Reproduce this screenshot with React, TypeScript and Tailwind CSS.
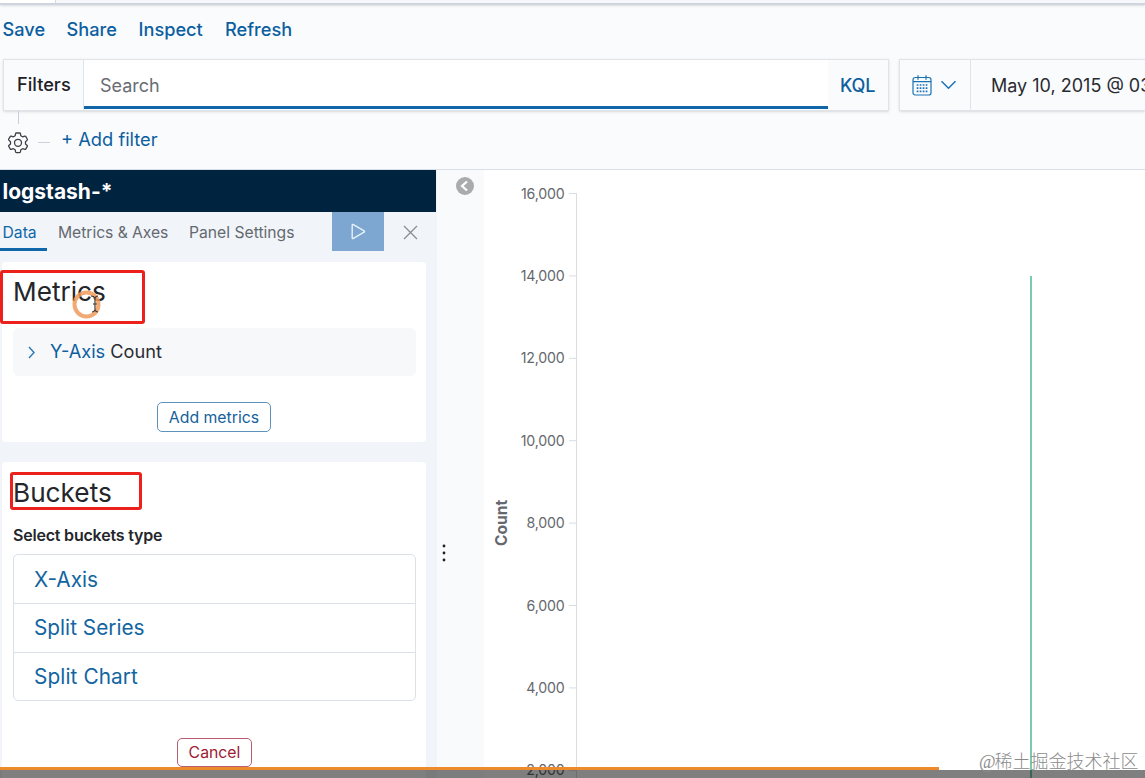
const ticks = ['16,000', '14,000', '12,000', '10,000', '8,000', '6,000', '4,000', '2,000'];

function Gear() {
  return (
    <svg width="22" height="22" viewBox="0 0 22 22" fill="none" stroke="#3d4046" strokeWidth="1.3" strokeLinejoin="round">
      <path d="M9.300 1h3.400q.6 0 .7.600l.4 2.100 1.900 1.100 2.100-.7q.6-.2.9.3l1.600 2.800q.3.500-.1.900l-1.700 1.600v2.200l1.700 1.500q.4.400.1.900l-1.600 2.800q-.3.500-.9.300l-2.100-.7-1.900 1.100-.4 2.200q-.1.600-.7.600H9.300q-.6 0-.7-.6l-.4-2.200-1.900-1.100-2.100.7q-.6.200-.9-.3l-1.600-2.800q-.3-.5.1-.9l1.700-1.500V9.700L1.800 8.100q-.4-.4-.1-.9l1.600-2.800q.3-.5.9-.3l2.100.7 1.900-1.100.4-2.100q.1-.6.700-.6z" />
      <circle cx="11" cy="10.8" r="3.5" />
    </svg>
  );
}

function Calendar() {
  return (
    <svg className="shrink-0" width="20" height="21" viewBox="0 0 20 21" fill="none" stroke="#1a72b5" strokeWidth="1.2">
      <rect x="1" y="2.5" width="18" height="17.5" rx="2.2" />
      <path d="M1 6.6h18M6 .3v4.400M14 .3v4.400" />
      <path d="M4.700 10h10.800M4.700 13.200h10.800M4.700 16.400h10.800" strokeWidth="1.7" strokeDasharray="1.7 1.3" />
    </svg>
  );
}

function TopBar() {
  return (
    <>
      <div className="flex h-[5px] shrink-0 border-b-2 border-[#cfd4df] bg-[#f5f7fb] shadow-sm">
        <div className="h-[3px] w-14 border-r border-[#d3dae6] bg-white" />
      </div>
      <nav className="flex h-[54px] shrink-0 items-start gap-[21px] pl-[2.5px] pt-[12px] text-[18.2px] leading-6 font-medium text-[#0c5f9f]">
        <a className="w-[43px]">Save</a>
        <a className="w-[51px]">Share</a>
        <a className="w-[65.5px]">Inspect</a>
        <a>Refresh</a>
      </nav>
      <div className="flex h-[52px] shrink-0 pl-[3px]">
        <div className="flex w-[886px] shrink-0 border border-[#dfe3ea] shadow-sm">
          <div className="flex w-[80px] items-center border-r border-[#dfe3ea] pl-[13px] text-[18.2px] font-medium text-[#1f2126]">Filters</div>
          <div className="mb-px flex w-[744px] items-center border-b-[3px] border-[#0f66a8] bg-white pl-4 pt-[4px] text-[18px] text-[#686c73]">Search</div>
          <div className="flex flex-1 items-center pl-[12px] text-[18px] font-medium tracking-[-0.2px] text-[#0c5f9f]">KQL</div>
        </div>
        <div className="ml-[10px] flex min-w-0 flex-1 overflow-hidden border-y border-l border-[#dfe3ea] shadow-sm">
          <div className="flex w-[71px] shrink-0 items-center gap-2 border-r border-[#dfe3ea] pl-3">
            <Calendar />
            <svg className="shrink-0" width="17" height="10" viewBox="0 0 17 10" fill="none" stroke="#1a72b5" strokeWidth="1.5"><path d="m1.500 1.300 7 7 7-7" /></svg>
          </div>
          <div className="flex shrink-0 items-center whitespace-nowrap pl-5 text-[18px] text-[#292b31]">May 10, 2015 @ 03:00</div>
        </div>
      </div>
      <div className="flex h-[59px] shrink-0 border-b border-[#d9dfe8] pl-[7px]">
        <div className="flex w-[22px] flex-col">
          <div className="ml-[11px] h-[13px] w-px bg-[#c9ced8]" />
          <div className="mt-[8px]"><Gear /></div>
        </div>
        <div className="ml-[9px] mt-[31px] h-px w-3 bg-[#ccd1da]" />
        <div className="ml-[11px] pt-4 text-[18.3px] leading-6 whitespace-nowrap text-[#0c5f9f]">+ Add filter</div>
      </div>
    </>
  );
}

function Metrics() {
  return (
    <section className="relative ml-[2px] mt-[11px] flex h-[180px] w-[424px] shrink-0 flex-col rounded bg-white pl-[11px]">
      <h2 className="h-[66px] pt-[14px] text-[26.2px] leading-8 text-[#24262b]">Metrics</h2>
      <div className="flex h-[48px] w-[403px] items-center rounded-md bg-[#f7f8fa] pl-[14px] text-[18.2px] text-[#2b2d33]">
        <svg className="mr-[14px]" width="9" height="13" viewBox="0 0 9 13" fill="none" stroke="#2679b7" strokeWidth="1.4"><path d="m2 1 5 5.500-5 5.500" /></svg>
        <span className="whitespace-nowrap"><span className="text-[#0c5f9f]">Y-Axis</span> Count</span>
      </div>
      <button className="ml-[144px] mt-[26px] h-[30px] w-[114px] rounded-[5px] border border-[#5e91bc] pt-px text-[15.8px] leading-6 whitespace-nowrap text-[#155f9b]">Add metrics</button>
      <div className="absolute -left-[2px] top-[8px] h-[54px] w-[145px] rounded-[3px] border-3 border-[#ed211b]" />
      <svg className="absolute left-[68px] top-[27px]" width="33" height="33" viewBox="0 0 33 33" fill="none">
        <circle cx="16.5" cy="15.5" r="12" stroke="#ef9b5c" strokeOpacity=".85" strokeWidth="4" />
        <path d="M21 7q3 0 4 2 1-2 3-2M25 9v12M22 23q2 0 3-2 1 2 3 2M23 15h4" stroke="#43372f" strokeWidth="1.2" />
      </svg>
    </section>
  );
}

function Buckets() {
  return (
    <section className="relative ml-[2px] mt-5 flex h-[330px] w-[424px] shrink-0 flex-col rounded bg-white pl-[11px]">
      <h2 className="h-[61px] pt-[15px] text-[26.2px] leading-8 text-[#24262b]">Buckets</h2>
      <div className="h-[31px] text-[16px] leading-6 font-semibold tracking-[-0.2px] text-[#24262b]">Select buckets type</div>
      <div className="flex h-[147px] w-[403px] shrink-0 flex-col divide-y divide-[#dce0e7] rounded-[5px] border border-[#dce0e7] text-[20.8px] text-[#12659f]">
        <div className="flex flex-1 items-center pl-5 pt-px">X-Axis</div>
        <div className="flex flex-1 items-center pl-5 pb-px">Split Series</div>
        <div className="flex flex-1 items-center pl-5 tracking-[0.1px]">Split Chart</div>
      </div>
      <button className="ml-[164px] mt-[37px] h-[29px] w-[75px] shrink-0 rounded-[5px] border border-[#b85d70] pt-px text-[15.8px] leading-6 text-[#9c1b31]">Cancel</button>
      <div className="absolute left-[8px] top-[10px] h-[38px] w-[132px] rounded-[3px] border-3 border-[#ed211b]" />
    </section>
  );
}

function Editor() {
  return (
    <aside className="flex w-[437px] shrink-0 flex-col overflow-hidden bg-[#f1f5f9]">
      <h1 className="h-[42px] w-[436px] shrink-0 bg-[#00233f] pl-[2.5px] pt-[6px] text-[21px] leading-8 font-bold text-white">logstash-*</h1>
      <div className="flex h-[39px] shrink-0 text-[15.7px] whitespace-nowrap text-[#646970]">
        <div className="w-[47px] border-b-[3px] border-[#0f66a8] pl-[2.5px] pt-[9px] text-[#0c67a8]">Data</div>
        <div className="ml-[11px] w-[110px] pt-[9px] tracking-[-0.05px]">Metrics &amp; Axes</div>
        <div className="ml-[21px] w-[143px] pt-[9px]">Panel Settings</div>
        <button className="flex w-[52px] items-center justify-center bg-[#7da7d1]">
          <svg width="15" height="17" viewBox="0 0 15 17" fill="none" stroke="#e7f1fa" strokeWidth="1.4" strokeLinejoin="round"><path d="M1.200 2.200v12.600q0 1.300 1.200.6l10.700-6.200q.9-.7 0-1.400L2.400 1.600q-1.200-.6-1.200.6Z" /></svg>
        </button>
        <svg className="ml-[19px] mt-[13px]" width="15" height="15" viewBox="0 0 15 15" stroke="#888d94" strokeWidth="1.3"><path d="m1 1 13 13M14 1 1 14" /></svg>
      </div>
      <Metrics />
      <Buckets />
    </aside>
  );
}

function Chart() {
  return (
    <svg className="block shrink-0" width="661" height="608" viewBox="0 0 661 608" fontFamily="Inter, sans-serif">
      <path d="M92.500 23v585" stroke="#d9dce1" />
      {ticks.map((label, i) => (
        <g key={label}>
          <path d={`M85 ${23.5 + i * 82.4}h8`} stroke="#d9dce1" />
          <text x="80.5" y={28.5 + i * 82.4} textAnchor="end" fontSize="14.2" letterSpacing="-0.2" fill="#65686d">{label}</text>
        </g>
      ))}
      <text transform="translate(22.500 376) rotate(-90)" fontSize="15.6" fontWeight="700" fill="#65686e">Count</text>
      <path d="M547 106v502" stroke="#7bc9ae" strokeWidth="2" />
    </svg>
  );
}

export default function App() {
  return (
    <div className="relative flex h-[778px] w-[1145px] flex-col overflow-hidden bg-[#fafbfd] font-[Inter,sans-serif]">
      <TopBar />
      <main className="flex h-[608px] shrink-0 overflow-hidden">
        <Editor />
        <div className="flex w-[47px] shrink-0 flex-col bg-[#f9fafc]">
          <svg className="ml-[19px] mt-[7px] shrink-0" width="18" height="18" viewBox="0 0 18 18"><circle cx="9" cy="9" r="9" fill="#a9abae" /><path d="m11 4.500-5 4.500 5 4.500" fill="none" stroke="#fff" strokeWidth="2.3" /></svg>
          <svg className="ml-[4px] mt-[348px] shrink-0" width="6" height="20" viewBox="0 0 6 20" fill="#202126"><circle cx="3" cy="3" r="1.4" /><circle cx="3" cy="10" r="1.4" /><circle cx="3" cy="17" r="1.4" /></svg>
        </div>
        <div className="flex-1 bg-white"><Chart /></div>
      </main>
      <div className="absolute bottom-0 left-0 h-2 w-full bg-black/50" />
      <div className="absolute bottom-2 left-0 h-[3px] w-[939px] bg-[#ed8b2c]" />
      <div className="absolute left-[979px] top-[750px] text-[18px] leading-6 whitespace-nowrap text-[#8b8b8b] font-['Liberation_Serif','Noto_Sans_CJK_SC',sans-serif]">
        <span className="tracking-[-1.2px]">@</span><span className="font-light">稀土掘金技术社区</span>
      </div>
    </div>
  );
}
